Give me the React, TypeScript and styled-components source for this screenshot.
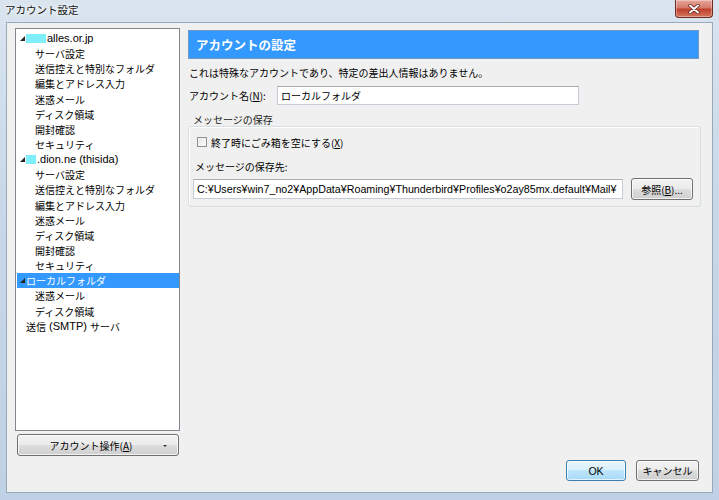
import React, { useState } from "react";
import styled, { createGlobalStyle } from "styled-components";

const GlobalStyle = createGlobalStyle`
  html, body {
    margin: 0;
    padding: 0;
    overflow: hidden;
  }
  body {
    font-family: "Noto Sans CJK JP", "Noto Sans", sans-serif;
    font-size: 10px;
    color: #000;
  }
  * {
    box-sizing: border-box;
  }
`;

const Window = styled.div`
  width: 719px;
  height: 500px;
  display: flex;
  flex-direction: column;
  background: linear-gradient(180deg, #d9e4ef 0%, #c9d8e8 40%, #bfd1e4 100%);
`;

const TitleBar = styled.div`
  height: 22px;
  display: flex;
  align-items: flex-start;
  justify-content: space-between;
  padding-left: 5px;
  padding-right: 6px;
`;

const Title = styled.div`
  font-size: 10.5px;
  line-height: 20px;
  color: #111;
  text-shadow: 0 0 6px #fff, 0 0 3px #fff;
`;

const CloseButton = styled.div`
  width: 38px;
  height: 18px;
  display: flex;
  align-items: center;
  justify-content: center;
  border: 1px solid #6e2b22;
  border-top: none;
  border-radius: 0 0 4px 4px;
  background: linear-gradient(180deg, #e8a59a 0%, #d47a6a 45%, #c0412c 55%, #d2765f 100%);
  box-shadow: inset 0 0 0 1px rgba(255, 255, 255, 0.35);
`;

const Body = styled.div`
  flex: 1;
  margin: 0 6px 7px 6px;
  background: #f0f0f0;
  border: 1px solid #98a9bc;
  padding: 5px 11px 0 8px;
  display: flex;
  flex-direction: column;
`;

const Main = styled.div`
  display: grid;
  grid-template-columns: 165px 1fr;
  column-gap: 8px;
  height: 428px;
`;

const LeftColumn = styled.div`
  display: flex;
  flex-direction: column;
`;

const Tree = styled.div`
  height: 403px;
  background: #fff;
  border: 1px solid #828790;
  padding: 2px 0 0 0;
`;

const TreeRow = styled.div<{ $level: number; $selected?: boolean }>`
  height: 15.15px;
  line-height: 15px;
  display: flex;
  align-items: center;
  margin: 0 0 0 ${(p) => (p.$selected ? 1 : 0)}px;
  padding-left: ${(p) => (p.$level === 0 ? 2 : 19) - (p.$selected ? 1 : 0)}px;
  background: ${(p) => (p.$selected ? "#3399ff" : "transparent")};
  color: ${(p) => (p.$selected ? "#fff" : "#000")};
  white-space: nowrap;
`;

const Expander = styled.span`
  width: 8px;
  height: 15px;
  display: flex;
  align-items: center;
  justify-content: center;
`;

const NoExpander = styled.span`
  width: 8px;
`;

const Redacted = styled.span<{ $w: number }>`
  display: inline-block;
  width: ${(p) => p.$w}px;
  height: 9px;
  margin-right: 1px;
  background: #7eeefa;
`;

const RowText = styled.span`
  display: flex;
  align-items: center;
`;

const Latin = styled.span<{ $size?: number }>`
  font-family: "Liberation Sans", Arial, sans-serif;
  font-size: ${(p) => p.$size ?? 11}px;
`;

const Win7Button = styled.button<{ $default?: boolean }>`
  font-family: inherit;
  font-size: 10px;
  color: #000;
  height: 22px;
  padding: 0 2px;
  white-space: nowrap;
  border-radius: 3px;
  border: 1px solid ${(p) => (p.$default ? "#3c7fb1" : "#707070")};
  background: ${(p) =>
    p.$default
      ? "linear-gradient(180deg, #eaf6fd 0%, #d9f0fc 49%, #bee6fd 50%, #a7d9f5 100%)"
      : "linear-gradient(180deg, #f2f2f2 0%, #ebebeb 49%, #dddddd 50%, #cfcfcf 100%)"};
  box-shadow: inset 0 0 0 1px rgba(255, 255, 255, 0.7);
  display: flex;
  align-items: center;
  justify-content: center;
  cursor: default;
`;

const ActionButton = styled(Win7Button)`
  margin-top: 3px;
  width: 162px;
  margin-left: 2px;
  padding-right: 16px;
  position: relative;
`;

const DropDot = styled.span`
  position: absolute;
  right: 11px;
  top: 10px;
  width: 0;
  height: 0;
  border-left: 2px solid transparent;
  border-right: 2px solid transparent;
  border-top: 2px solid #333;
`;

const RightColumn = styled.div`
  display: flex;
  flex-direction: column;
  padding-top: 2px;
`;

const Header = styled.div`
  height: 29px;
  margin-right: 2px;
  background: #3399ff;
  border: 1px solid #6f9ac7;
  color: #fff;
  font-weight: bold;
  font-size: 12.5px;
  line-height: 27px;
  padding-left: 7px;
`;

const Description = styled.div`
  margin-top: 7px;
  line-height: 14px;
  padding-left: 1px;
`;

const FieldRow = styled.div`
  margin-top: 6px;
  display: flex;
  align-items: center;
  padding-left: 1px;
`;

const FieldLabel = styled.label`
  width: 88px;
`;

const TextBox = styled.input<{ $width?: number; $latin?: boolean }>`
  font-family: ${(p) =>
    p.$latin ? `"Liberation Sans", Arial, sans-serif` : "inherit"};
  font-size: ${(p) => (p.$latin ? 10.7 : 10)}px;
  height: ${(p) => (p.$width ? 19 : 20)}px;
  width: ${(p) => (p.$width ? `${p.$width}px` : "auto")};
  min-width: 0;
  flex: ${(p) => (p.$width ? "none" : "1")};
  border: 1px solid #c5ccd6;
  border-top-color: #abadb3;
  background: #fff;
  padding: 0 2px 0 3px;
  outline: none;
  color: #000;
`;

const GroupTitle = styled.div`
  margin-top: 9px;
  padding-left: 5px;
  line-height: 12px;
  color: #222;
`;

const GroupBox = styled.div`
  border: 1px solid #d5dfe5;
  border-radius: 3px;
  box-shadow: inset 1px 1px 0 #fff;
  padding: 8px 7px 6px 4px;
  display: flex;
  flex-direction: column;
`;

const CheckRow = styled.label`
  display: flex;
  align-items: center;
  height: 14px;
  padding-left: 4px;
  gap: 4px;
`;

const CheckBox = styled.span<{ $checked: boolean }>`
  width: 10px;
  height: 10px;
  border: 1px solid #8f8f8f;
  background: linear-gradient(135deg, #dcdcdc 0%, #f5f5f5 60%, #ffffff 100%);
  box-shadow: inset 0 0 0 1px #f4f4f4;
  display: flex;
  align-items: center;
  justify-content: center;
`;

const SubLabel = styled.div`
  margin-top: 11px;
  line-height: 14px;
  padding-left: 2px;
`;

const PathRow = styled.div`
  margin-top: 4px;
  display: flex;
  align-items: center;
  gap: 8px;
`;

const BrowseButton = styled(Win7Button)`
  width: 62px;
  flex: none;
`;

const Footer = styled.div`
  margin-top: 4px;
  display: flex;
  justify-content: flex-end;
  gap: 10px;
  padding-right: 2px;
`;

const FooterButton = styled(Win7Button)<{ $w: number }>`
  width: ${(p) => p.$w}px;
  height: 21px;
`;

const Accel = styled.span`
  text-decoration: underline;
`;

function ExpandedArrow() {
  return (
    <svg width="5" height="5" viewBox="0 0 5 5">
      <polygon points="5,0 5,5 0,5" fill="#262626" />
    </svg>
  );
}

type Node = {
  label: React.ReactNode;
  level: number;
  expander?: boolean;
};

const accountChildren = [
  "サーバ設定",
  "送信控えと特別なフォルダ",
  "編集とアドレス入力",
  "迷惑メール",
  "ディスク領域",
  "開封確認",
  "セキュリティ",
];

const nodes: Node[] = [
  {
    level: 0,
    expander: true,
    label: (
      <RowText>
        <Redacted $w={20} />
        <Latin>alles.or.jp</Latin>
      </RowText>
    ),
  },
  ...accountChildren.map((c) => ({ level: 1, label: c })),
  {
    level: 0,
    expander: true,
    label: (
      <RowText>
        <Redacted $w={10} />
        <Latin>.dion.ne (thisida)</Latin>
      </RowText>
    ),
  },
  ...accountChildren.map((c) => ({ level: 1, label: c })),
  { level: 0, expander: true, label: "ローカルフォルダ" },
  { level: 1, label: "迷惑メール" },
  { level: 1, label: "ディスク領域" },
  {
    level: 0,
    label: (
      <RowText>
        送信<Latin>&nbsp;(SMTP)&nbsp;</Latin>サーバ
      </RowText>
    ),
  },
];

export default function App() {
  const [selected, setSelected] = useState(16);
  const [emptyTrash, setEmptyTrash] = useState(false);

  return (
    <>
      <GlobalStyle />
      <Window>
        <TitleBar>
          <Title>アカウント設定</Title>
          <CloseButton>
            <svg width="12" height="10" viewBox="0 0 12 10">
              <path
                d="M2 1.5 L10 8.5 M10 1.5 L2 8.5"
                stroke="#5a1a12"
                strokeWidth="3.4"
                strokeLinecap="round"
              />
              <path
                d="M2 1.5 L10 8.5 M10 1.5 L2 8.5"
                stroke="#fff"
                strokeWidth="2"
                strokeLinecap="round"
              />
            </svg>
          </CloseButton>
        </TitleBar>
        <Body>
          <Main>
            <LeftColumn>
              <Tree>
                {nodes.map((n, i) => (
                  <TreeRow
                    key={i}
                    $level={n.level}
                    $selected={i === selected}
                    onClick={() => setSelected(i)}
                  >
                    {n.level === 0 &&
                      (n.expander ? (
                        <Expander>
                          <ExpandedArrow />
                        </Expander>
                      ) : (
                        <NoExpander />
                      ))}
                    {n.label}
                  </TreeRow>
                ))}
              </Tree>
              <ActionButton>
                <span>
                  アカウント操作(<Accel>A</Accel>)
                </span>
                <DropDot />
              </ActionButton>
            </LeftColumn>
            <RightColumn>
              <Header>アカウントの設定</Header>
              <Description>
                これは特殊なアカウントであり、特定の差出人情報はありません。
              </Description>
              <FieldRow>
                <FieldLabel>
                  アカウント名(<Accel>N</Accel>):
                </FieldLabel>
                <TextBox $width={302} defaultValue="ローカルフォルダ" />
              </FieldRow>
              <GroupTitle>メッセージの保存</GroupTitle>
              <GroupBox>
                <CheckRow onClick={() => setEmptyTrash(!emptyTrash)}>
                  <CheckBox $checked={emptyTrash}>
                    {emptyTrash && (
                      <svg width="8" height="8" viewBox="0 0 8 8">
                        <path d="M1 4 L3 6 L7 1" stroke="#333" strokeWidth="1.5" fill="none" />
                      </svg>
                    )}
                  </CheckBox>
                  <span>
                    終了時にごみ箱を空にする(<Accel>X</Accel>)
                  </span>
                </CheckRow>
                <SubLabel>メッセージの保存先:</SubLabel>
                <PathRow>
                  <TextBox
                    $latin
                    defaultValue="C:¥Users¥win7_no2¥AppData¥Roaming¥Thunderbird¥Profiles¥o2ay85mx.default¥Mail¥"
                  />
                  <BrowseButton>
                    参照(<Accel>B</Accel>)...
                  </BrowseButton>
                </PathRow>
              </GroupBox>
            </RightColumn>
          </Main>
          <Footer>
            <FooterButton $w={60} $default>
              <Latin $size={10.5}>OK</Latin>
            </FooterButton>
            <FooterButton $w={63}>キャンセル</FooterButton>
          </Footer>
        </Body>
      </Window>
    </>
  );
}
